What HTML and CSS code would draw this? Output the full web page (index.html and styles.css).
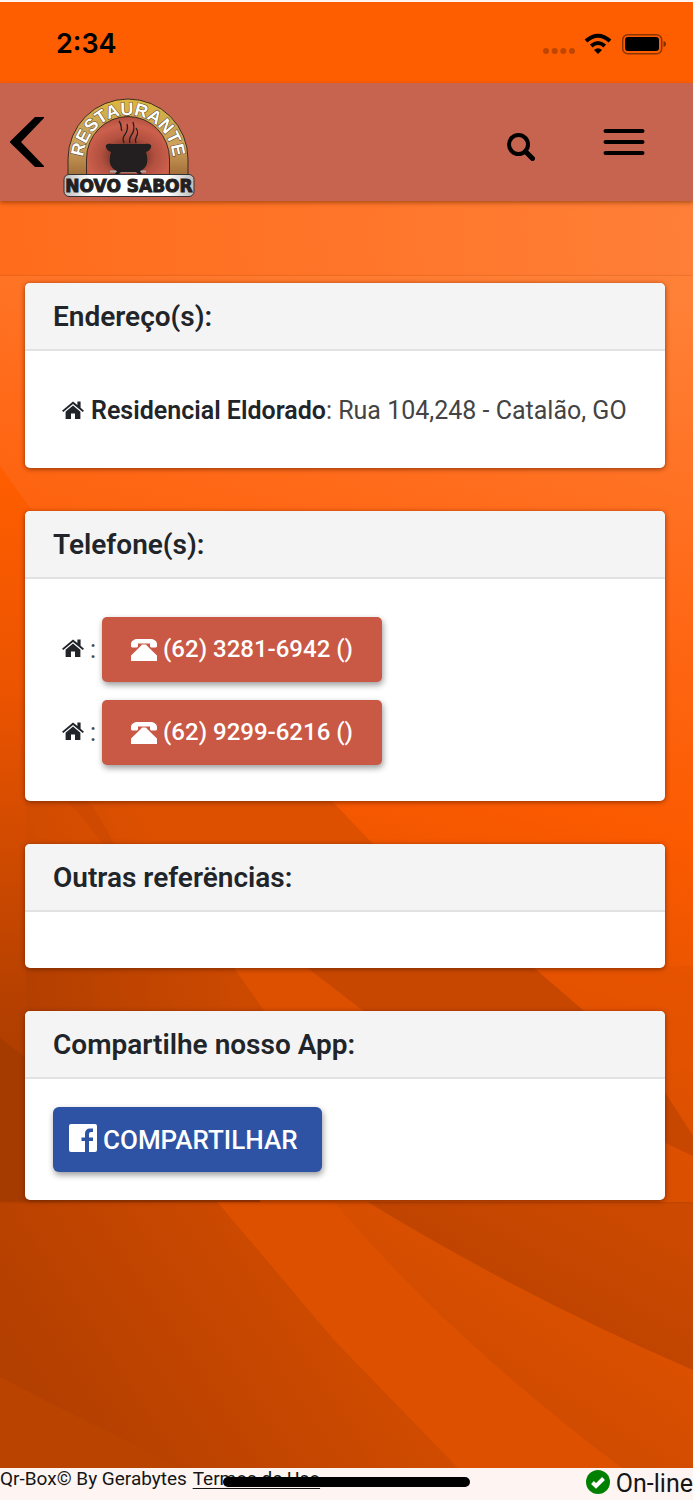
FILE: index.html
```html
<!DOCTYPE html>
<html lang="pt-BR">
<head>
<meta charset="utf-8">
<meta name="viewport" content="width=device-width, initial-scale=1">
<title>Restaurante Novo Sabor</title>
<link rel="stylesheet" href="styles.css">
</head>
<body>
<svg class="defs" width="0" height="0" aria-hidden="true">
  <symbol id="home" viewBox="0 0 22 20">
    <path d="M11 1.500 0 10.700 1.300 12.100 11 4 20.700 12.100 22 10.700 18.600 7.800V1.500H15.400V5.100Z"/>
    <path d="M11 5.500 3.600 11.700V19H9V13.500H13V19H18.400V11.700Z"/>
  </symbol>
  <symbol id="phone" viewBox="0 0 26 24">
    <path d="M0 8V6C0 3 3 1 7 1H19C23 1 26 3 26 6V8C26 9 25 9.500 24 9.500H21C20 9.500 19 9 19 8V5.500H7V8C7 9 6 9.500 5 9.500H2C1 9.500 0 9 0 8Z"/>
    <path d="M11 6.500H15Q16 8 26 17.500V23H0V17.500Q10 8 11 6.500Z"/>
  </symbol>
</svg>
<div class="page">
  <header class="status">
    <time class="clock">2:34</time>
    <svg class="signals" width="124" height="24" viewBox="0 0 124 24" aria-label="Wi-Fi e bateria">
      <g opacity=".25"><circle cx="3" cy="19" r="3"/><circle cx="11.700" cy="19" r="3"/><circle cx="20.300" cy="19" r="3"/><circle cx="29" cy="19" r="3"/></g>
      <path d="M43 9Q55 -1.500 67 9M48.200 14Q55 8 61.800 14" fill="none" stroke="#000" stroke-width="4"/>
      <path d="M51 18Q55 14.500 59 18L55 22Z"/>
      <rect x="79.700" y="2.700" width="39" height="19" rx="5" fill="none" stroke="#000" stroke-opacity=".45" stroke-width="1.500"/>
      <rect x="82" y="5" width="34" height="14" rx="3"/>
      <path d="M120.500 9Q123 9.500 123 12T120.500 15Z" opacity=".5"/>
    </svg>
  </header>
  <nav class="navbar">
    <button class="icon-button" aria-label="Voltar"><svg width="34" height="50" viewBox="0 0 34 50"><path d="M25 0H34V1L11 25 34 49V50H25L0 25.500V24.500Z"/></svg></button>
    <svg class="logo" width="132" height="100" viewBox="0 0 132 100" role="img" aria-label="Restaurante Novo Sabor">
      <defs>
        <linearGradient id="gold" x2="0" y2="1"><stop stop-color="#deb83d"/><stop offset=".35" stop-color="#c9a454"/><stop offset=".6" stop-color="#cfa15c"/><stop offset="1" stop-color="#a06c37"/></linearGradient>
        <radialGradient id="glow" cx=".5" cy=".66" r=".65"><stop stop-color="#3a1916"/><stop offset=".5" stop-color="#b2503f"/><stop offset=".8" stop-color="#cc604d"/><stop offset="1" stop-color="#b45040"/></radialGradient>
        <linearGradient id="plate"><stop stop-color="#bbb"/><stop offset=".2" stop-color="#fff"/><stop offset=".8" stop-color="#fff"/><stop offset="1" stop-color="#bbb"/></linearGradient>
        <path id="arch" d="M20 63A45 46 0 0 1 110 63"/>
      </defs>
      <path d="M5 79V61A60 60 0 0 1 125 61V79Z" fill="url(#gold)" stroke="#3c2b20"/>
      <path d="M23.500 79V61A41.500 42.500 0 0 1 106.500 61V79Z" fill="url(#glow)" stroke="#3c2b20"/>
      <text class="logo-arch"><textPath href="#arch" startOffset="50%" text-anchor="middle">RESTAURANTE</textPath></text>
      <path d="M47 73.500H83" stroke="#aaa" stroke-width="2"/>
      <path d="M43 47C45 45 49 46 51 46H80C82 46 86 45 88 47C89 50 86 53 83 54C86 64 84 70 77 73L79 76H75L73 74H58L56 76H52L54 73C47 70 45 64 48 54C45 53 42 50 43 47Z" fill="#231f20"/>
      <path d="M61 45C57 36 67 37 64 26M67 45C64 37 74 37 70 24M73 45C70 38 78 38 73 30M59 33C57 30 60 28 56 23" fill="none" stroke="#231f20" stroke-width="1.300"/>
      <rect x="1" y="76.500" width="130" height="22" rx="5" fill="url(#plate)" stroke="#333"/>
      <text class="logo-name" x="66" y="94" text-anchor="middle">NOVO SABOR</text>
    </svg>
    <button class="icon-button search" aria-label="Buscar"><svg width="28" height="28" viewBox="0 0 28 28"><circle cx="11.500" cy="11.500" r="9.500" fill="none" stroke="#000" stroke-width="4"/><path d="M18.500 18.500 25.500 25.500" stroke="#000" stroke-width="5" stroke-linecap="round"/></svg></button>
    <button class="icon-button" aria-label="Menu"><svg width="42" height="28" viewBox="0 0 42 28"><path d="M2.500 3H39.500M2.500 14H39.500M2.500 25H39.500" stroke="#000" stroke-width="4" stroke-linecap="round"/></svg></button>
  </nav>
  <main class="content">
    <svg class="backdrop" viewBox="0 0 693 1267" preserveAspectRatio="none" aria-hidden="true">
      <defs>
        <linearGradient id="sky" gradientUnits="userSpaceOnUse" x1="0" y1="80" x2="693" y2="0"><stop stop-color="#ff6c1b"/><stop offset="1" stop-color="#ff7f38"/></linearGradient>
        <linearGradient id="shade" gradientUnits="userSpaceOnUse" x1="320" y1="1060" x2="60" y2="1230"><stop stop-color="#d04b00"/><stop offset="1" stop-color="#b33f00"/></linearGradient>
        <linearGradient id="fold" gradientUnits="userSpaceOnUse" x1="480" y1="1180" x2="550" y2="1070"><stop stop-color="#d04b00"/><stop offset="1" stop-color="#db5000"/></linearGradient>
        <linearGradient id="corner" gradientUnits="userSpaceOnUse" x1="600" y1="1000" x2="540" y2="1110"><stop stop-color="#cb4900"/><stop offset="1" stop-color="#bf4400"/></linearGradient>
      </defs>
      <path fill="url(#sky)" d="M0 0H693V600H0Z"/>
      <path fill="#dd5000" d="M0 600H693V1267H0Z"/>
      <path fill="url(#shade)" d="M0 990H208L335 1140 458 1267H0Z"/>
      <path fill="url(#fold)" d="M325 990Q440 1130 622 1267H693V1169L350 990Z"/>
      <path fill="url(#corner)" d="M350 990H693V1169Q510 1090 350 990Z"/>
      <path fill="#ba4300" d="M0 1176Q90 1223 184 1267H0Z"/>
    </svg>
    <div class="panels">
      <svg class="backdrop" viewBox="0 0 693 926" preserveAspectRatio="none" aria-hidden="true">
        <defs>
          <linearGradient id="blaze" gradientUnits="userSpaceOnUse" x1="620" y1="0" x2="360" y2="926"><stop stop-color="#ff8138"/><stop offset=".32" stop-color="#ff6816"/><stop offset=".55" stop-color="#fb5a00"/><stop offset=".8" stop-color="#df5100"/><stop offset="1" stop-color="#d54d00"/></linearGradient>
          <linearGradient id="edge" gradientUnits="userSpaceOnUse" x1="0" y1="190" x2="0" y2="926"><stop stop-color="#ff5e00"/><stop offset=".3" stop-color="#ec5400"/><stop offset=".55" stop-color="#cc4900"/><stop offset=".75" stop-color="#b33f00"/><stop offset="1" stop-color="#a63b00"/></linearGradient>
          <linearGradient id="middle" gradientUnits="userSpaceOnUse" x1="0" y1="570" x2="140" y2="520"><stop stop-color="#cc4900"/><stop offset="1" stop-color="#dd5000"/></linearGradient>
          <linearGradient id="lower" gradientUnits="userSpaceOnUse" x1="0" y1="720" x2="240" y2="690"><stop stop-color="#b03e00"/><stop offset="1" stop-color="#cc4900"/></linearGradient>
        </defs>
        <path fill="url(#blaze)" d="M0 0H693V926H0Z"/>
        <path fill="url(#edge)" d="M0 190Q70 290 180 420L260 926H0Z"/>
        <path fill="url(#middle)" d="M26 490 180 500 332 525 375 570V740H26Z"/>
        <path fill="#cf4a00" d="M68 525H88Q100 540 115 570L104 569Z"/>
        <path fill="url(#lower)" d="M26 630H190L234 692 268 740H26Z"/>
        <path fill="#c84700" d="M305 690H532L590 740H370Z"/>
        <path fill="#e25100" d="M532 690 590 740 640 780H693V690Z" opacity=".6"/>
        <path fill="#c84700" d="M640 780Q665 815 693 860V880L640 855Z"/>
        <path fill="#a63b00" d="M0 762 30 785V926H0Z"/>
      </svg>
      <section class="card">
        <h2 class="card-title">Endereço(s):</h2>
        <div class="card-body padded">
          <p class="line"><svg class="home" aria-hidden="true"><use href="#home"/></svg><span><b>Residencial Eldorado</b>: Rua 104,248 - Catalão, GO</span></p>
        </div>
      </section>
      <section class="card">
        <h2 class="card-title">Telefone(s):</h2>
        <div class="card-body padded phones">
          <div class="line"><svg class="home" aria-hidden="true"><use href="#home"/></svg><span>:</span><button class="button call"><svg class="phone" aria-hidden="true"><use href="#phone"/></svg>(62) 3281-6942 ()</button></div>
          <div class="line"><svg class="home" aria-hidden="true"><use href="#home"/></svg><span>:</span><button class="button call"><svg class="phone" aria-hidden="true"><use href="#phone"/></svg>(62) 9299-6216 ()</button></div>
        </div>
      </section>
      <section class="card">
        <h2 class="card-title">Outras referëncias:</h2>
        <div class="card-body"></div>
      </section>
      <section class="card">
        <h2 class="card-title">Compartilhe nosso App:</h2>
        <div class="card-body">
          <button class="button share"><svg class="facebook" width="28" height="28" viewBox="0 0 28 28" aria-hidden="true"><path fill="#fff" d="M2 0H26Q28 0 28 2V26Q28 28 26 28H20V17H24V13.500H20V10Q20 8 22 8H24V4.500H21Q16 4.500 16 10V13.500H12.500V17H16V28H2Q0 28 0 26V2Q0 0 2 0Z"/></svg>COMPARTILHAR</button>
        </div>
      </section>
    </div>
  </main>
  <footer class="footer">
    <p class="credits">Qr-Box© By Gerabytes <a class="terms" href="#termos">Termos de Uso</a></p>
    <p class="online"><svg width="24" height="24" viewBox="0 0 24 24" aria-hidden="true"><circle cx="12" cy="12" r="12" fill="#008000"/><path d="M6.500 12.500 10 16 17.500 8.500" fill="none" stroke="#fff" stroke-width="4"/></svg>On-line</p>
    <span class="home-indicator"></span>
  </footer>
</div>
</body>
</html>
```
FILE: styles.css
```css
* { box-sizing: border-box; }
body { margin: 0; font-family: Roboto, "Liberation Sans", sans-serif; color: #212529; }
h2, p { margin: 0; }
button { border: 0; padding: 0; font: inherit; cursor: pointer; }
svg { display: block; flex: none; }
.defs { position: absolute; }
.page { min-height: 100vh; display: flex; flex-direction: column; }

.status {
  height: 83px;
  padding: 2px 26px 0 56px;
  display: flex;
  align-items: center;
  justify-content: space-between;
  background: #ff5e00;
  border-top: 2px solid #fff5f0;
}
.clock { font: 600 27px/32px Inter, sans-serif; color: #000; }

.navbar {
  position: relative;
  z-index: 1;
  height: 118px;
  padding: 0 48px 0 10px;
  display: flex;
  align-items: center;
  background: #c6644f;
  box-shadow: 0 2px 4px rgba(100, 40, 0, .5);
}
.icon-button { background: none; }
.logo { margin: 12px auto 0 19px; }
.logo-arch { font: bold 18px "Liberation Sans", sans-serif; fill: #fff; stroke: #55432c; stroke-width: 1px; paint-order: stroke; }
.logo-name { font: bold 17px "DejaVu Sans", sans-serif; fill: #231f20; stroke: #231f20; stroke-width: 1px; }
.search { margin: 10px 68px 0 0; }

.content { position: relative; flex: 1; padding-top: 75px; }
.backdrop { position: absolute; inset: 0; width: 100%; height: 100%; z-index: -1; }
.panels {
  position: relative;
  z-index: 0;
  padding: 7px 28px 2px 25px;
  display: flex;
  flex-direction: column;
  gap: 43px;
  box-shadow: 0 0 2px rgba(130, 50, 0, .4);
}
.card { background: #fff; border-radius: 5px; overflow: hidden; box-shadow: 0 1px 5px rgba(90, 30, 0, .7); }
.card-title {
  padding: 16px 28px 15px;
  font-size: 28px;
  line-height: 35px;
  font-weight: 600;
  background: #f4f4f4;
  border-bottom: 2px solid #e2e2e2;
}
.card-body { padding: 28px; }
.padded { padding: 38px 37px 36px; }
.line { display: flex; align-items: center; gap: 7px; font-size: 25px; line-height: 43px; color: #444; }
.line b { font-weight: 600; color: #212529; }
.home { width: 22px; height: 20px; margin-bottom: 2px; fill: #212529; }
.phones { display: grid; gap: 18px; }
.phones .line { gap: 6px; }
.phones .home { margin-bottom: 4px; }
.button {
  height: 65px;
  display: flex;
  align-items: center;
  gap: 6px;
  border-radius: 5px;
  color: #fff;
  font-weight: 500;
  box-shadow: 1px 3px 6px rgba(0, 0, 0, .4);
}
.call { padding: 0 29px; background: #c95845; font-size: 24px; }
.phone { width: 26px; height: 24px; fill: #fff; }
.share { padding: 0 24px 0 16px; background: #2e53a5; font-size: 26px; border-radius: 6px; }
.facebook { margin-bottom: 3px; }

.footer {
  position: relative;
  height: 32px;
  display: flex;
  justify-content: space-between;
  background: #fef5f2;
  color: #151515;
}
.credits { font-size: 19px; line-height: 22px; }
.terms { color: inherit; margin-left: 1px; text-underline-offset: 3px; }
.online { display: flex; align-items: center; gap: 6px; font-size: 25px; line-height: 32px; }
.online svg { margin-bottom: 4px; }
.home-indicator { position: absolute; left: 50%; top: 9px; width: 247px; height: 10px; margin-left: -124px; border-radius: 5px; background: #000; }
```
